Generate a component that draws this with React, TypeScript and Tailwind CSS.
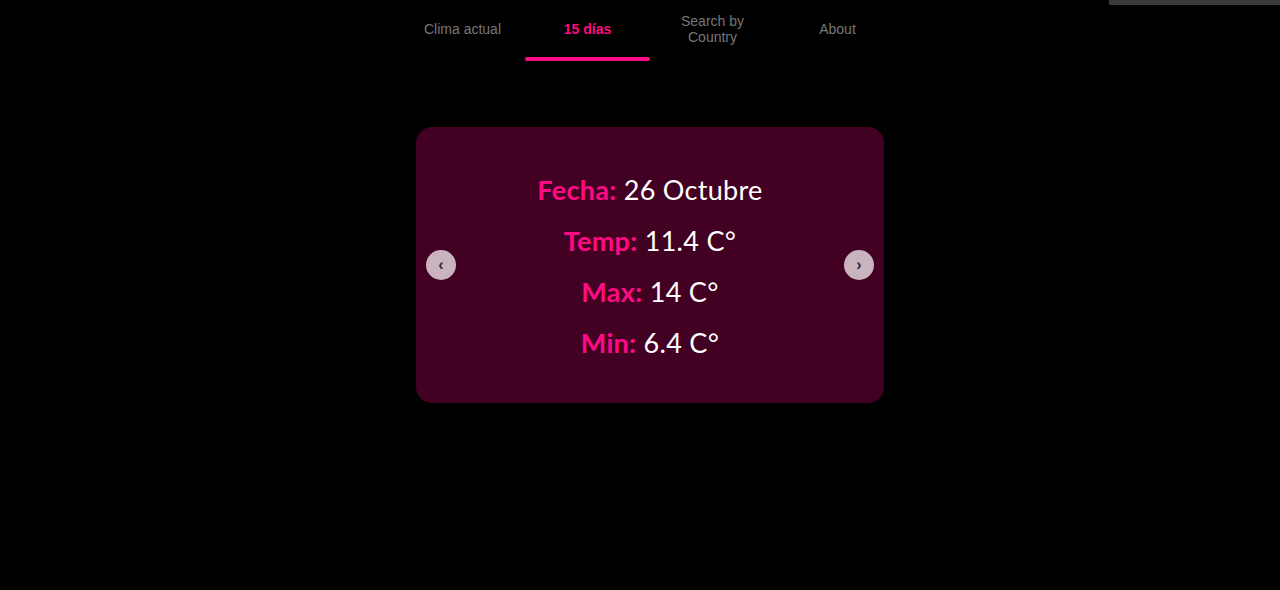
import { useState } from 'react';

const TABS = ['Clima actual', '15 días', 'Search by Country', 'About'];

const DAYS = [
  { fecha: '26 Octubre', temp: '11.4', max: '14', min: '6.4' },
  { fecha: '27 Octubre', temp: '12.1', max: '15', min: '7.2' },
];

export default function App() {
  const [active, setActive] = useState(1);
  const [day, setDay] = useState(0);
  const d = DAYS[day];

  const rows = [
    { label: 'Fecha:', value: d.fecha },
    { label: 'Temp:', value: `${d.temp} C°` },
    { label: 'Max:', value: `${d.max} C°` },
    { label: 'Min:', value: `${d.min} C°` },
  ];

  return (
    <div className="relative min-h-[590px] w-full bg-black pl-[20px] font-['Liberation_Sans',sans-serif]">
      {/* top-right strip */}
      <div className="absolute right-0 top-0 h-[5px] w-[171px] bg-[#3a3a3a]" />

      {/* Tabs */}
      <nav className="flex justify-center">
        {TABS.map((tab, i) => (
          <button
            key={tab}
            onClick={() => setActive(i)}
            className="relative flex h-[61px] w-[125px] items-center justify-center pb-[4px]"
          >
            <span
              className={
                active === i
                  ? 'text-[14px] font-bold leading-[16px] text-[#ff0a84]'
                  : 'w-[80px] text-[14px] leading-[16px] text-[#777777]'
              }
            >
              {tab}
            </span>
            {active === i && (
              <span className="absolute bottom-0 left-0 h-[4px] w-full rounded-full bg-[#ff0a84]" />
            )}
          </button>
        ))}
      </nav>

      {/* Card */}
      <div className="mt-[66px] flex justify-center">
        <div className="flex h-[276px] w-[468px] items-center justify-between rounded-[16px] bg-[#420022] px-[10px]">
          <button
            onClick={() => setDay((day + DAYS.length - 1) % DAYS.length)}
            className="flex h-[30px] w-[30px] items-center justify-center rounded-full bg-[#c8b3be] text-[16px] font-bold leading-none text-[#2a2a40]"
          >
            ‹
          </button>
          <div className="flex flex-col items-center gap-[16px] pt-[2px] font-['Lato',sans-serif] text-[27px] leading-[35px] tracking-[0.3px]">
            {rows.map((r) => (
              <p key={r.label} className="text-white">
                <span className="font-bold text-[#ff0a84]">{r.label}</span> {r.value}
              </p>
            ))}
          </div>
          <button
            onClick={() => setDay((day + 1) % DAYS.length)}
            className="flex h-[30px] w-[30px] items-center justify-center rounded-full bg-[#c8b3be] text-[16px] font-bold leading-none text-[#2a2a40]"
          >
            ›
          </button>
        </div>
      </div>
    </div>
  );
}
